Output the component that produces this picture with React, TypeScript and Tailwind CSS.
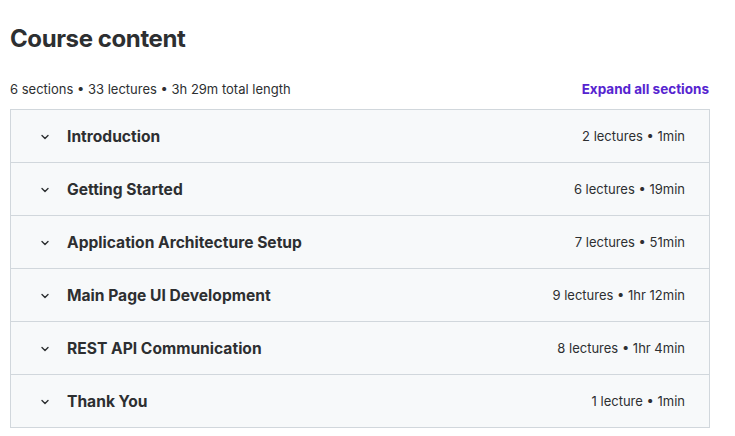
import React from "react";

const sections = [
  { title: "Introduction", meta: "2 lectures • 1min" },
  { title: "Getting Started", meta: "6 lectures • 19min" },
  { title: "Application Architecture Setup", meta: "7 lectures • 51min" },
  { title: "Main Page UI Development", meta: "9 lectures • 1hr 12min" },
  { title: "REST API Communication", meta: "8 lectures • 1hr 4min" },
  { title: "Thank You", meta: "1 lecture • 1min" },
];

const Chevron = () => (
  <svg width="10" height="10" viewBox="0 0 10 10" fill="none" className="shrink-0">
    <path d="M2 3.5 L5 6.5 L8 3.5" stroke="#2d2f31" strokeWidth="1.4" strokeLinecap="round" strokeLinejoin="round" />
  </svg>
);

const App = () => {
  return (
    <div className="w-[735px] h-[436px] bg-white text-[#2d2f31] font-['Inter',sans-serif] pl-[10px] pr-[25px]">
      {/* header */}
      <h2 className="pt-[24px] text-[24px] leading-[30px] font-bold tracking-[-0.4px]">Course content</h2>

      <div className="mt-[25px] flex items-center justify-between text-[13px] leading-[20px]">
        <span>6 sections • 33 lectures • 3h 29m total length</span>
        <button className="font-bold text-[13.5px] text-[#5624d0] mr-[1px]">Expand all sections</button>
      </div>

      {/* sections */}
      <div className="mt-[10px] border-x border-b border-[#d1d7dc]">
        {sections.map((s) => (
          <div
            key={s.title}
            className="flex items-center h-[53px] bg-[#f7f9fa] border-t border-[#d1d7dc] pt-[2px] pl-[29px] pr-[24px]"
          >
            <Chevron />
            <span className="ml-[17px] text-[15.6px] font-bold">{s.title}</span>
            <span className="ml-auto text-[13px]">{s.meta}</span>
          </div>
        ))}
      </div>
    </div>
  );
};

export default App;
